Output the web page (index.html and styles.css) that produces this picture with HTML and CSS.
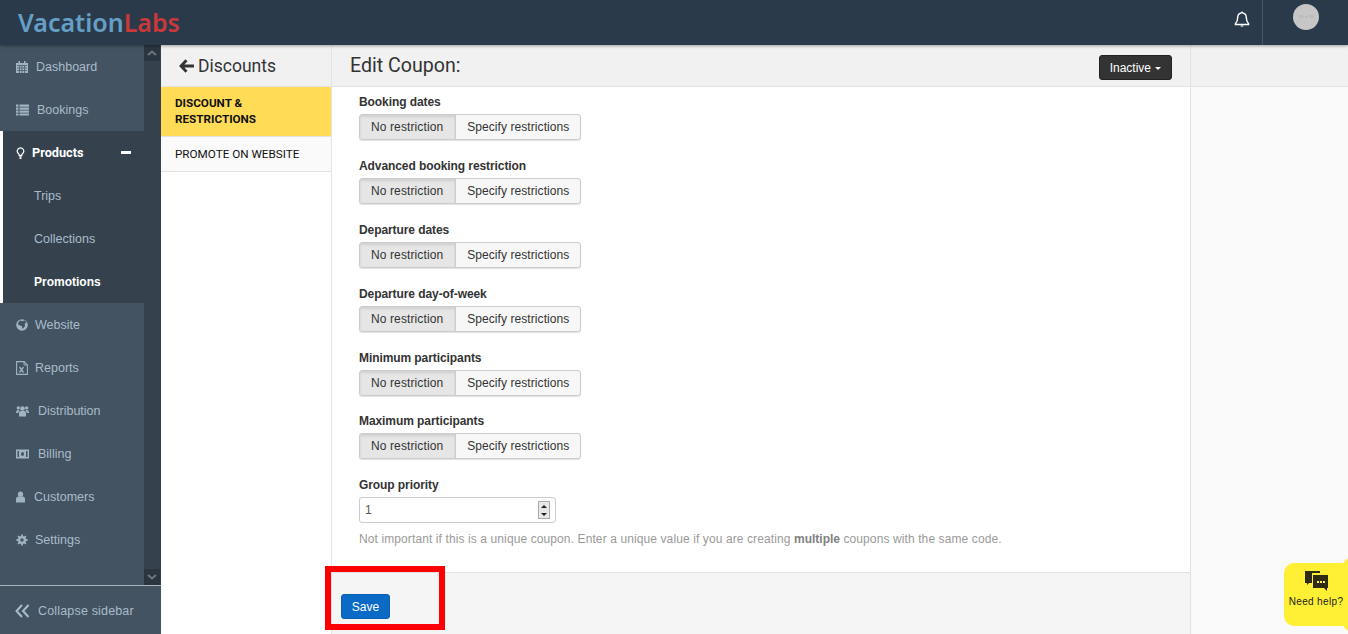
FILE: index.html
```html
<!DOCTYPE html>
<html lang="en">
<head>
<meta charset="utf-8">
<title>Edit Coupon</title>
<link rel="stylesheet" href="styles.css">
</head>
<body>
<header class="topbar">
  <div class="logo"><span class="logo-a">Vacation</span><span class="logo-b">Labs</span></div>
  <div class="top-right">
    <svg class="bell" viewBox="0 0 16 17" width="16" height="17"><path d="M8 1.200c.6 0 1 .4 1 .9 2.200.4 3.300 2.200 3.300 4.400 0 3.200.9 4.700 2.300 6.200v.8H1.400v-.8C2.800 11.200 3.700 9.700 3.700 6.500c0-2.200 1.100-4 3.300-4.400 0-.5.400-.9 1-.9z" fill="none" stroke="#fff" stroke-width="1.400"/><path d="M6.300 14.600a1.800 1.800 0 0 0 3.400 0z" fill="#fff"/></svg>
    <div class="top-user"><div class="avatar">30 x 30</div></div>
  </div>
</header>
<div class="shell">
  <aside class="sidebar">
    <div class="side-scroll">
      <nav class="nav">
        <a class="nav-item"><svg class="ic" viewBox="0 0 12 12"><path d="M0 2h12v10H0z" fill="#9fb3c2"/><path d="M2.500 0h1.500v3H2.500zM8 0h1.500v3H8z" fill="#9fb3c2"/><path d="M1 4.500h10M1 7h10M1 9.500h10M3.500 4v8M6 4v8M8.500 4v8" stroke="#435361" stroke-width=".7"/></svg><span class="l1">Dashboard</span></a>
        <a class="nav-item"><svg class="ic ic-w" viewBox="0 0 13 11"><path d="M0 0h2.500v2.200H0zM3.500 0H13v2.200H3.500zM0 3h2.500v2.200H0zM3.500 3H13v2.200H3.500zM0 6h2.500v2.200H0zM3.500 6H13v2.200H3.500zM0 9h2.500v2H0zM3.500 9H13v2H3.500z" fill="#9fb3c2"/></svg><span class="l2">Bookings</span></a>
        <div class="nav-group">
          <a class="nav-item nav-head"><svg class="ic ic-n" viewBox="0 0 9 13"><path d="M4.500 1a3.500 3.500 0 0 0-2 6.400c.4.400.6 1 .6 1.600h2.800c0-.6.200-1.200.6-1.600a3.500 3.500 0 0 0-2-6.400z" fill="none" stroke="#fff" stroke-width="1.300"/><path d="M3 10h3v1H3zM3.500 11.500h2V13h-2z" fill="#fff"/></svg><span class="head-label">Products</span><span class="minus"></span></a>
          <a class="nav-sub">Trips</a>
          <a class="nav-sub">Collections</a>
          <a class="nav-sub active">Promotions</a>
        </div>
        <a class="nav-item"><svg class="ic" viewBox="0 0 12 12"><circle cx="6" cy="6" r="5.800" fill="#9fb3c2"/><path d="M4 1.500l2.500.8 2-1 2.200 2.500-2 .8.3 2.400-2.300 3-1-3L2.500 6l-.5-2z" fill="#435361"/></svg><span class="l3">Website</span></a>
        <a class="nav-item"><svg class="ic ic-r" viewBox="0 0 12 14"><path d="M.6.600h7.500l3.300 3.300v9.500H.6z" fill="none" stroke="#9fb3c2" stroke-width="1.100"/><path d="M8 .6v3.400h3.400" fill="none" stroke="#9fb3c2"/><path d="M3.500 6l4 5.500M7.500 6l-4 5.500" stroke="#9fb3c2" stroke-width="1.300"/></svg><span class="l3">Reports</span></a>
        <a class="nav-item"><svg class="ic ic-w" viewBox="0 0 13 11"><circle cx="6.500" cy="3" r="2.300" fill="#9fb3c2"/><circle cx="2.300" cy="2.400" r="1.700" fill="#9fb3c2"/><circle cx="10.700" cy="2.400" r="1.700" fill="#9fb3c2"/><path d="M3 11V7.500c0-1.500 1-2 2-2h3c1 0 2 .5 2 2V11zM0 7.500c0-2 1-3 2-3h1.500L2.200 7.500zM13 7.500c0-2-1-3-2-3H9.500l1.300 3z" fill="#9fb3c2"/></svg><span class="l4">Distribution</span></a>
        <a class="nav-item"><svg class="ic ic-w" viewBox="0 0 13 9"><rect width="13" height="9" fill="#9fb3c2"/><rect x="1.500" y="1.500" width="10" height="6" fill="#435361"/><rect x="3" y="1.500" width="7" height="6" fill="#9fb3c2"/><ellipse cx="6.500" cy="4.500" rx="1.500" ry="2" fill="#435361"/></svg><span class="l4">Billing</span></a>
        <a class="nav-item"><svg class="ic ic-n" viewBox="0 0 9 11"><circle cx="4.500" cy="2.700" r="2.600" fill="#9fb3c2"/><path d="M0 11V7.500C0 6 1 5 2.300 5h4.400C8 5 9 6 9 7.500V11z" fill="#9fb3c2"/></svg><span class="l5">Customers</span></a>
        <a class="nav-item"><svg class="ic" viewBox="0 0 12 12"><path d="M6 .5v11M.5 6h11M2.100 2.100l7.800 7.800M9.900 2.100l-7.800 7.800" stroke="#9fb3c2" stroke-width="1.800"/><circle cx="6" cy="6" r="4" fill="#9fb3c2"/><circle cx="6" cy="6" r="1.700" fill="#435361"/></svg><span class="l3">Settings</span></a>
      </nav>
      <div class="scrollbar">
        <div class="sb-btn"><svg viewBox="0 0 10 6" width="10" height="6"><path d="M1 5l4-3.500L9 5" fill="none" stroke="#6b7680" stroke-width="2"/></svg></div>
        <div class="sb-btn"><svg viewBox="0 0 10 6" width="10" height="6"><path d="M1 1l4 3.500L9 1" fill="none" stroke="#6b7680" stroke-width="2"/></svg></div>
      </div>
    </div>
    <div class="collapse">
      <svg viewBox="0 0 15 14" width="15" height="14"><path d="M7 1L1.500 7 7 13M13.500 1L8 7l5.500 6" fill="none" stroke="#a9bccb" stroke-width="2"/></svg>
      <span>Collapse sidebar</span>
    </div>
  </aside>
  <section class="subnav">
    <div class="subnav-head">
      <svg viewBox="0 0 15 14" width="15" height="14"><path d="M7.500 1.200L2 7l5.500 5.800M2.500 7H15" fill="none" stroke="#333" stroke-width="2.800"/></svg>
      <span>Discounts</span>
    </div>
    <a class="subnav-item current">DISCOUNT &amp; RESTRICTIONS</a>
    <a class="subnav-item">PROMOTE ON WEBSITE</a>
  </section>
  <main class="main">
    <div class="page-head">
      <div class="page-head-left">
        <h1>Edit Coupon:</h1>
        <button class="status">Inactive <span class="caret"></span></button>
      </div>
      <div class="page-head-right"></div>
    </div>
    <div class="page-body">
      <div class="content-col">
        <form class="form">
          <div class="field"><label>Booking dates</label><div class="btn-group"><span class="seg on">No restriction</span><span class="seg">Specify restrictions</span></div></div>
          <div class="field"><label>Advanced booking restriction</label><div class="btn-group"><span class="seg on">No restriction</span><span class="seg">Specify restrictions</span></div></div>
          <div class="field"><label>Departure dates</label><div class="btn-group"><span class="seg on">No restriction</span><span class="seg">Specify restrictions</span></div></div>
          <div class="field"><label>Departure day-of-week</label><div class="btn-group"><span class="seg on">No restriction</span><span class="seg">Specify restrictions</span></div></div>
          <div class="field"><label>Minimum participants</label><div class="btn-group"><span class="seg on">No restriction</span><span class="seg">Specify restrictions</span></div></div>
          <div class="field"><label>Maximum participants</label><div class="btn-group"><span class="seg on">No restriction</span><span class="seg">Specify restrictions</span></div></div>
          <div class="field"><label>Group priority</label>
            <div class="number"><span>1</span><span class="spin"><i class="up"></i><i class="down"></i></span></div>
            <p class="hint">Not important if this is a unique coupon. Enter a unique value if you are creating <b>multiple</b> coupons with the same code.</p>
          </div>
        </form>
        <div class="form-foot"><button type="button" class="save">Save</button></div>
      </div>
      <div class="right-col"></div>
    </div>
  </main>
</div>
<div class="highlight"></div>
<div class="help">
  <svg viewBox="0 0 25 22" width="25" height="22"><path d="M1 1h15v2H8v10H5l-2 2v-2H1z" fill="#2f2a14"/><path d="M9 5h15v13h-1v3l-3-3H9z" fill="#2f2a14"/><path d="M13 11h2v2h-2zM16 11h2v2h-2zM19 11h2v2h-2z" fill="#fff04a"/></svg>
  <span>Need help?</span>
</div>
</body>
</html>
```
FILE: styles.css
```css
* { box-sizing: border-box; }
html, body { height: 100%; }
body {
  margin: 0;
  height: 634px;
  overflow: hidden;
  font-family: "Liberation Sans", Arial, sans-serif;
  font-size: 12px;
  color: #333;
  background: #f9f9f9;
  display: flex;
  flex-direction: column;
}
.topbar {
  height: 45px;
  flex: none;
  background: #2a3a4b;
  display: flex;
  justify-content: space-between;
  box-shadow: 0 1px 3px rgba(0,0,0,.35);
  position: relative;
  z-index: 2;
}
.logo {
  font-family: "Noto Sans", "Open Sans", sans-serif;
  font-size: 25px;
  font-weight: 600;
  line-height: 44px;
  padding-left: 18px;
  letter-spacing: 0;
}
.logo-a { color: #659fc6; }
.logo-b { color: #c9383a; }
.top-right { display: flex; align-items: flex-start; }
.bell { margin: 11px 12px 0 0; }
.top-user { width: 86px; height: 45px; border-left: 1px solid #485767; padding: 4px 0 0 30px; }
.avatar {
  width: 26px; height: 26px; border-radius: 50%;
  background: #c6c6c6; color: #aaa;
  font-size: 5px; line-height: 26px; text-align: center;
  font-family: "Liberation Serif", serif;
}
.shell { flex: 1; display: flex; min-height: 0; }
.sidebar { width: 161px; flex: none; display: flex; flex-direction: column; background: #435361; }
.side-scroll { flex: 1; display: flex; min-height: 0; }
.nav { width: 144px; flex: none; display: flex; flex-direction: column; }
.nav-item {
  height: 43px; flex: none;
  display: flex; align-items: center;
  padding-left: 16px;
  color: #a9bccb;
  font-size: 12.500px;
}
.ic { width: 12px; height: 12px; flex: none; }
.ic-w { width: 13px; }
.ic-n { width: 9px; }
.ic-r { height: 14px; }
.l1 { margin-left: 8px; }
.l2 { margin-left: 8px; }
.l3 { margin-left: 7px; }
.l4 { margin-left: 9px; }
.l5 { margin-left: 9px; }
.nav-group { background: #35424e; border-left: 3px solid #fff; }
.nav-head { padding-left: 13px; color: #fff; }
.head-label { margin-left: 7px; font-family: Roboto, sans-serif; font-weight: 700; font-size: 12.700px; flex: 1; }
.minus { width: 10px; height: 3px; background: #fff; margin-right: 13px; }
.nav-sub {
  display: flex; align-items: center; height: 43px;
  padding-left: 31px; color: #a9bccb; font-size: 12.500px;
}
.nav-sub.active { color: #fff; font-weight: 700; font-size: 12px; }
.scrollbar {
  width: 17px; flex: none; background: #35424e;
  display: flex; flex-direction: column; justify-content: space-between;
  padding: 0 1px 0 0;
}
.sb-btn { height: 16px; background: #2a3540; display: flex; align-items: center; justify-content: center; }
.collapse {
  height: 49px; flex: none;
  border-top: 1px solid #a9b4bd;
  display: flex; align-items: center;
  padding: 1px 0 0 15px;
  color: #a9bccb;
  font-size: 12.500px;
  letter-spacing: .17px;
}
.collapse span { margin-left: 8px; }
.subnav { width: 171px; flex: none; background: #fff; border-right: 1px solid #e4e4e4; }
.subnav-head {
  height: 42px;
  background: #f1f1f1;
  border-bottom: 1px solid #e4e4e4;
  display: flex; align-items: center;
  padding: 1px 0 0 18px;
  font-family: Roboto, sans-serif;
  font-size: 17.500px;
  color: #333;
}
.subnav-head span { margin-left: 4px; }
.subnav-item {
  display: flex; align-items: center;
  min-height: 35px;
  padding: 8px 14px;
  font-family: Roboto, sans-serif;
  font-size: 11.700px;
  color: #111;
  background: #fafafa;
  border-bottom: 1px solid #e2e2e2;
}
.subnav-item.current {
  height: 50px;
  line-height: 16px;
  font-weight: 700;
  background: #ffdb56;
  padding: 6px 40px 8px 14px;
}
.main { flex: 1; min-width: 0; display: flex; flex-direction: column; }
.page-head { height: 42px; flex: none; background: #f1f1f1; border-bottom: 1px solid #e2e2e2; display: flex; }
.page-head-left {
  width: 859px;
  border-right: 1px solid #e2e2e2;
  display: flex; justify-content: space-between;
  padding: 0 18px 0 18px;
}
h1 {
  margin: 9px 0 0;
  font-family: Roboto, sans-serif;
  font-size: 19.600px; line-height: 24px; font-weight: 400; color: #333;
}
.status {
  margin-top: 10px;
  height: 25px; width: 73px; padding: 0;
  background: #333; color: #fff;
  border: 1px solid #222; border-radius: 3px;
  font: 12px "Liberation Sans", Arial, sans-serif;
}
.caret {
  display: inline-block; vertical-align: middle;
  border: 3px solid transparent; border-top-color: #fff; border-bottom: 0;
  margin-left: 1px;
}
.page-body { flex: 1; display: flex; min-height: 0; }
.content-col { width: 859px; flex: none; background: #fff; border-right: 1px solid #e2e2e2; display: flex; flex-direction: column; }
.right-col { flex: 1; background: #f9f9f9; }
.form { flex: 1; padding: 7.400px 0 0 27px; }
.field { height: 63.800px; }
label { display: block; font-weight: 700; color: #333; line-height: 16px; margin-bottom: 4px; letter-spacing: -.08px; }
.btn-group { display: inline-flex; height: 26px; border: 1px solid #ccc; border-radius: 3px; background: #f7f7f7; box-shadow: 0 1px 1px rgba(0,0,0,.12); letter-spacing: .07px; }
.seg { display: flex; align-items: center; padding: 0 11px; color: #333; }
.seg.on { background: #e6e6e6; border-right: 1px solid #ccc; box-shadow: inset 0 2px 3px rgba(0,0,0,.1); letter-spacing: .11px; padding-right: 12px; }
.number {
  width: 197px; height: 26px;
  border: 1px solid #ccc; border-radius: 3px;
  background: #fff;
  display: flex; align-items: center; justify-content: space-between;
  padding: 0 5px 0 5px;
  font-size: 12px; color: #555;
}
.spin { width: 12px; height: 18px; background: #e8e8e8; border: 1px solid #aaa; display: flex; flex-direction: column; align-items: center; justify-content: space-around; }
.spin i { display: block; border: 3px solid transparent; }
.spin .up { border-bottom-color: #222; border-top: 0; }
.spin .down { border-top-color: #222; border-bottom: 0; }
.hint { margin: 8px 0 0; color: #9a9a9a; line-height: 16px; letter-spacing: .105px; }
.hint b { color: #808080; letter-spacing: 0; }
.form-foot { height: 62px; flex: none; background: #f5f5f5; border-top: 1px solid #e2e2e2; padding: 21px 0 0 9px; }
.save {
  width: 49px; height: 25px; padding: 0;
  background: #0a6ac6; color: #fff;
  border: 1px solid #0a5fb0; border-radius: 3px;
  font: 12px "Liberation Sans", Arial, sans-serif;
}
.highlight {
  position: absolute; left: 325px; top: 566px;
  width: 120px; height: 64px;
  border: 6px solid #fe0000;
}
.help {
  position: absolute; left: 1284px; top: 563px;
  width: 64px; height: 63px;
  background: #fff036;
  border-radius: 10px 0 0 10px;
  display: flex; flex-direction: column; align-items: center;
  padding-top: 7px;
  font-size: 10px; letter-spacing: .35px; color: #222;
}
.help span { margin-top: 4px; white-space: nowrap; }
.help::before, .help::after {
  content: "";
  position: absolute; right: 0;
  border-style: solid; border-width: 0 0 5px 5px;
  border-color: transparent transparent #fff036 transparent;
}
.help::before { top: -5px; }
.help::after { bottom: -5px; transform: scaleY(-1); }
```
